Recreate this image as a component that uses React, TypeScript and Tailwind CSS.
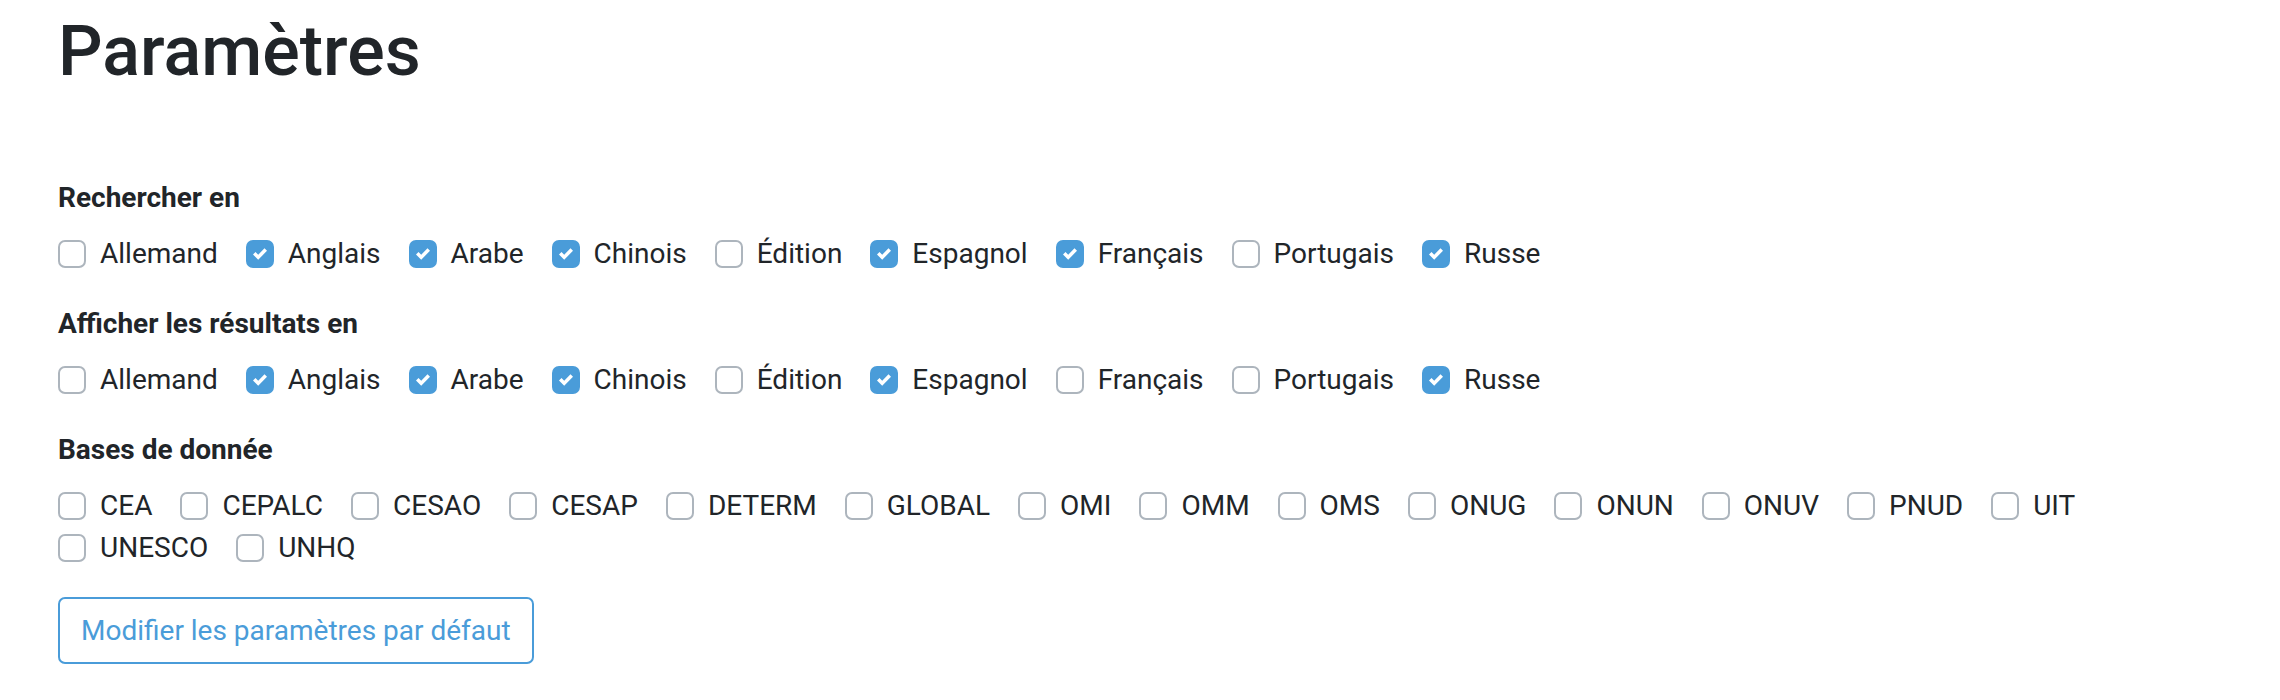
import React from "react";

const LANGS = ["Allemand", "Anglais", "Arabe", "Chinois", "Édition", "Espagnol", "Français", "Portugais", "Russe"];
const SEARCH_CHECKED = ["Anglais", "Arabe", "Chinois", "Espagnol", "Français", "Russe"];
const DISPLAY_CHECKED = ["Anglais", "Arabe", "Chinois", "Espagnol", "Russe"];
const DBS = ["CEA", "CEPALC", "CESAO", "CESAP", "DETERM", "GLOBAL", "OMI", "OMM", "OMS", "ONUG", "ONUN", "ONUV", "PNUD", "UIT", "UNESCO", "UNHQ"];

function Check({ label, checked }: { label: string; checked: boolean }) {
  return (
    <label className="relative inline-flex items-start mr-[28px] pl-[42px] h-[42px] leading-[42px]">
      <span
        className={
          "absolute left-0 top-[7px] w-[28px] h-[28px] rounded-[7px] flex items-center justify-center " +
          (checked ? "bg-[#4a9cd9] border-[2px] border-[#4a9cd9]" : "bg-white border-[2px] border-[#adb5bd]")
        }
      >
        {checked && (
          <svg width="14" height="14" viewBox="0 0 8 8">
            <path fill="#ffffff" d="M6.564.75l-3.59 3.612-1.538-1.55L0 4.26 2.974 7.25 8 2.193z" />
          </svg>
        )}
      </span>
      <span>{label}</span>
    </label>
  );
}

function Group({ title, items, checked }: { title: string; items: string[]; checked: string[] }) {
  return (
    <div className="mb-[28px]">
      <div className="font-bold leading-[42px] mb-[14px]">{title}</div>
      <div className="flex flex-wrap">
        {items.map((it) => (
          <Check key={it} label={it} checked={checked.includes(it)} />
        ))}
      </div>
    </div>
  );
}

export default function App() {
  return (
    <div
      className="min-h-[700px] bg-white text-[#212529] text-[28px] leading-[42px] px-[58px] pt-[9px]"
      style={{ fontFamily: "Roboto, 'Noto Sans', sans-serif" }}
    >
      <h1 className="text-[70px] leading-[84px] font-medium mb-[84px]">Paramètres</h1>
      <Group title="Rechercher en" items={LANGS} checked={SEARCH_CHECKED} />
      <Group title="Afficher les résultats en" items={LANGS} checked={DISPLAY_CHECKED} />
      <Group title="Bases de donnée" items={DBS} checked={[]} />
      <button className="border-[2px] border-[#4a9cd9] text-[#4a9cd9] rounded-[7px] px-[21px] py-[10.5px] leading-[42px] bg-white">
        Modifier les paramètres par défaut
      </button>
    </div>
  );
}
